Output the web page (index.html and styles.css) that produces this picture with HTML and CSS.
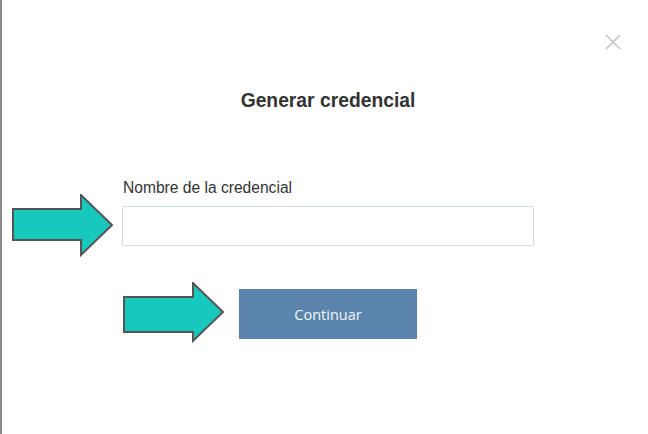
FILE: index.html
```html
<!DOCTYPE html>
<html lang="es">
<head>
<meta charset="utf-8">
<title>Generar credencial</title>
<link rel="stylesheet" href="styles.css">
</head>
<body>
<div class="modal">
  <button class="close" aria-label="Cerrar">
    <svg width="16" height="16" viewBox="0 0 16 16"><path d="M1 1L15 15M15 1L1 15" stroke="#c4c4c4" stroke-width="1.6" fill="none"/></svg>
  </button>
  <h1 class="title">Generar credencial</h1>
  <form class="form">
    <label class="label" for="name">Nombre de la credencial</label>
    <input class="input" id="name" type="text">
    <div class="actions">
      <button type="button" class="btn">Continuar</button>
    </div>
  </form>
  <svg class="arrow arrow-1" width="104" height="64" viewBox="0 0 104 64"><path d="M2 15H70V1L101 31L70 61V46H2Z" fill="#17c8bc" stroke="#555" stroke-width="2" stroke-linejoin="miter"/></svg>
  <svg class="arrow arrow-2" width="104" height="64" viewBox="0 0 104 64"><path d="M2 15H71V1L101 30L71 59V50H2Z" fill="#17c8bc" stroke="#555" stroke-width="2"/></svg>
</div>
</body>
</html>
```
FILE: styles.css
```css
html, body {
  margin: 0;
  padding: 0;
  background: #fff;
}
body {
  font-family: "Liberation Sans", Arial, sans-serif;
  color: #333;
}
.modal {
  position: relative;
  width: 648px;
  height: 434px;
  box-sizing: border-box;
  border-left: 2px solid #8a8a8a;
  padding-top: 88px;
}
.close {
  position: absolute;
  top: 34px;
  left: 603px;
  width: 16px;
  height: 16px;
  padding: 0;
  border: 0;
  background: none;
  cursor: pointer;
}
.close svg { display: block; }
.title {
  margin: 0;
  text-align: center;
  font-size: 19.3px;
  font-weight: bold;
  line-height: 26px;
  color: #333;
  padding-left: 6px;
}
.form {
  display: flex;
  flex-direction: column;
  margin: 65px 0 0 120px;
  width: 412px;
}
.label {
  font-size: 15.6px;
  line-height: 18px;
  color: #333;
  margin-bottom: 9px;
  padding-left: 1px;
}
.input {
  box-sizing: border-box;
  width: 412px;
  height: 40px;
  border: 1px solid #d4dde3;
  border-radius: 1px;
  background: #fff;
  margin: 0;
}
.actions {
  display: flex;
  padding-left: 117px;
  margin-top: 43px;
}
.btn {
  width: 178px;
  height: 50px;
  border: 0;
  background: #5a84ab;
  color: #f2f6fa;
  font-family: "Open Sans", "Noto Sans", sans-serif;
  font-size: 14.5px;
  cursor: pointer;
}
.arrow {
  position: absolute;
  display: block;
}
.arrow-1 { left: 9px; top: 194px; }
.arrow-2 { left: 120px; top: 282px; }
```
